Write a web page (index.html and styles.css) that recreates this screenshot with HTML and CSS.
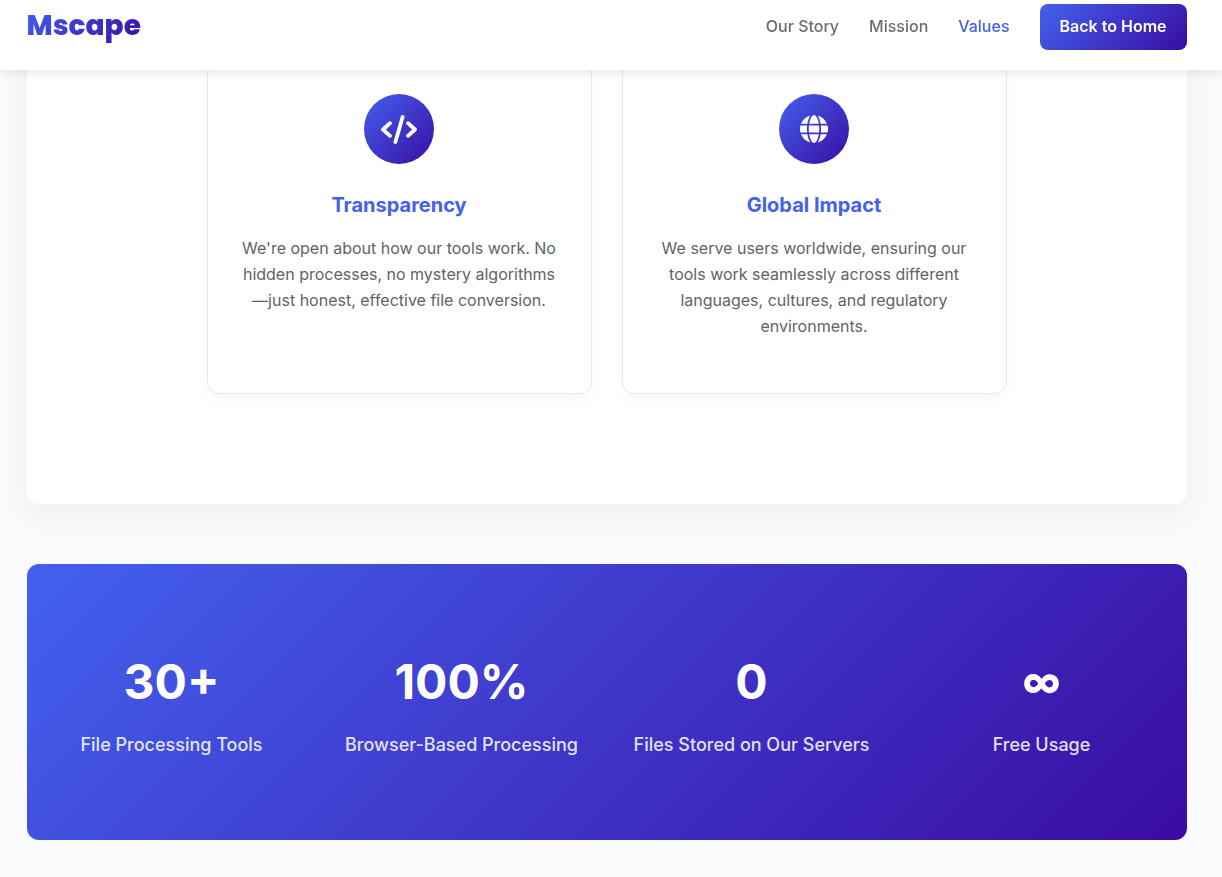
FILE: index.html
```html
<!DOCTYPE html>
<html lang="en">
<head>
<meta charset="utf-8">
<meta name="viewport" content="width=device-width, initial-scale=1">
<title>Mscape - Values</title>
<link rel="stylesheet" href="styles.css">
</head>
<body>
<header class="header">
  <div class="container header-row">
    <a class="logo" href="#">Mscape</a>
    <nav class="nav">
      <a class="nav-link" href="#story">Our Story</a>
      <a class="nav-link" href="#mission">Mission</a>
      <a class="nav-link active" href="#values">Values</a>
      <a class="btn" href="#home">Back to Home</a>
    </nav>
  </div>
</header>
<main class="container">
  <section class="values" id="values">
    <div class="values-grid">
      <article class="card">
        <div class="card-icon">
          <svg width="36" height="29" viewBox="0 0 640 512" fill="none" stroke="#fff" stroke-width="68" stroke-linecap="round" stroke-linejoin="round" aria-hidden="true"><path d="M160 144 36 256l124 112M480 144l124 112-124 112M384 34 256 478"/></svg>
        </div>
        <h3 class="card-title">Transparency</h3>
        <p class="card-text">We're open about how our tools work. No hidden processes, no mystery algorithms—just honest, effective file conversion.</p>
      </article>
      <article class="card">
        <div class="card-icon">
          <svg width="28" height="28" viewBox="0 0 512 512" fill="#fff" aria-hidden="true"><path d="M352 256c0 22.200-1.200 43.600-3.300 64H163.300c-2.200-20.400-3.300-41.800-3.300-64s1.200-43.600 3.300-64h185.400c2.200 20.400 3.300 41.800 3.300 64zm28.800-64h123.100c5.300 20.500 8.100 41.900 8.100 64s-2.800 43.500-8.100 64H380.800c2.100-20.600 3.200-42 3.200-64s-1.100-43.400-3.200-64zm112.600-32H376.700C366.700 96.100 346.900 42.600 321.400 8.400 399.700 29.100 463.400 85.800 493.400 160zM344.300 160H167.700c6.100-36.400 15.500-68.600 27-94.700 10.500-23.600 22.200-40.700 33.500-51.500C239.400 3.200 248.700 0 256 0s16.600 3.200 27.800 13.800c11.300 10.800 23 27.900 33.500 51.500 11.600 26 20.900 58.200 27 94.700zM135.300 160H18.600C48.600 85.800 112.200 29.100 190.600 8.400 165.100 42.600 145.300 96.100 135.300 160zM8.100 192h123.100c-2.100 20.600-3.200 42-3.200 64s1.100 43.400 3.200 64H8.100C2.800 299.500 0 278.100 0 256s2.800-43.500 8.100-64zM194.700 446.600c-11.600-26-20.900-58.200-27-94.600h176.600c-6.100 36.400-15.500 68.600-27 94.600-10.500 23.600-22.200 40.700-33.500 51.500C272.600 508.800 263.300 512 256 512s-16.600-3.200-27.800-13.800c-11.300-10.800-23-27.900-33.500-51.600zM135.300 352c10 63.900 29.800 117.400 55.300 151.600C112.200 482.900 48.600 426.200 18.600 352h116.700zm358.100 0c-30 74.200-93.600 130.900-172 151.600 25.500-34.200 45.200-87.700 55.300-151.600h116.700z"/></svg>
        </div>
        <h3 class="card-title">Global Impact</h3>
        <p class="card-text">We serve users worldwide, ensuring our tools work seamlessly across different languages, cultures, and regulatory environments.</p>
      </article>
    </div>
  </section>
  <section class="stats">
    <div class="stat"><div class="stat-number">30+</div><div class="stat-label">File Processing Tools</div></div>
    <div class="stat"><div class="stat-number">100%</div><div class="stat-label">Browser-Based Processing</div></div>
    <div class="stat"><div class="stat-number">0</div><div class="stat-label">Files Stored on Our Servers</div></div>
    <div class="stat"><div class="stat-number symbol">∞</div><div class="stat-label">Free Usage</div></div>
  </section>
</main>
</body>
</html>
```
FILE: styles.css
```css
:root {
  --primary: #4361ee;
  --gradient: linear-gradient(135deg, #4361ee, #3a0ca3);
}

* {
  box-sizing: border-box;
  margin: 0;
  padding: 0;
}

body {
  padding-right: 9px;
  background: #f8fafc;
  color: #212529;
  font-family: Inter, "Liberation Sans", sans-serif;
  font-size: 16px;
  line-height: 26px;
}

a {
  text-decoration: none;
}

.container {
  max-width: 1200px;
  margin: 0 auto;
  padding: 0 20px;
}

.header {
  position: fixed;
  top: 0;
  left: 0;
  right: 0;
  z-index: 10;
  padding: 4px 9px 20px 0;
  background: #fff;
  box-shadow: 0 2px 10px rgba(0, 0, 0, 0.1);
}

.header-row {
  display: flex;
  align-items: flex-start;
  justify-content: space-between;
}

.logo {
  background: var(--gradient);
  background-clip: text;
  -webkit-background-clip: text;
  color: transparent;
  font-family: Poppins, Inter, sans-serif;
  font-size: 28px;
  font-weight: 800;
  line-height: 44px;
}

.nav {
  display: flex;
  align-items: flex-start;
  gap: 30px;
}

.nav-link {
  padding: 9px 0;
  color: #6c6c6c;
  font-weight: 500;
}

.nav-link.active {
  color: var(--primary);
}

.btn {
  padding: 9px 20px 11px;
  border-radius: 8px;
  background: var(--gradient);
  color: #fff;
  font-weight: 600;
}

.values {
  margin-bottom: 60px;
  padding: 63px 20px 110px;
  border-radius: 12px;
  background: #fff;
  box-shadow: 0 10px 30px rgba(0, 0, 0, 0.05);
}

.values-grid {
  display: grid;
  grid-template-columns: 1fr 1fr;
  gap: 30px;
  max-width: 800px;
  margin: 0 auto;
}

.card {
  padding: 30px 30px 54px;
  border: 1px solid #e6e6fa;
  border-radius: 12px;
  background: #fff;
  box-shadow: 0 5px 15px rgba(0, 0, 0, 0.03);
  text-align: center;
}

.card-icon {
  display: flex;
  align-items: center;
  justify-content: center;
  width: 70px;
  height: 70px;
  margin: 0 auto 25px;
  border-radius: 50%;
  background: var(--gradient);
}

.card-title {
  margin-bottom: 14px;
  color: var(--primary);
  font-size: 20px;
  font-weight: 700;
  line-height: 32px;
}

.card-text {
  color: #5f6368;
}

.stats {
  display: grid;
  grid-template-columns: repeat(4, 1fr);
  padding: 79px 0 81px;
  border-radius: 12px;
  background: var(--gradient);
  color: #fff;
  text-align: center;
}

.stat-number {
  margin-bottom: 10px;
  font-size: 48px;
  font-weight: 700;
  line-height: 77px;
}

.stat-number.symbol {
  font-family: "Open Sans", "Noto Sans", sans-serif;
  font-size: 58px;
}

.stat-label {
  font-size: 18px;
  font-weight: 500;
  line-height: 29px;
  opacity: 0.85;
}
```
